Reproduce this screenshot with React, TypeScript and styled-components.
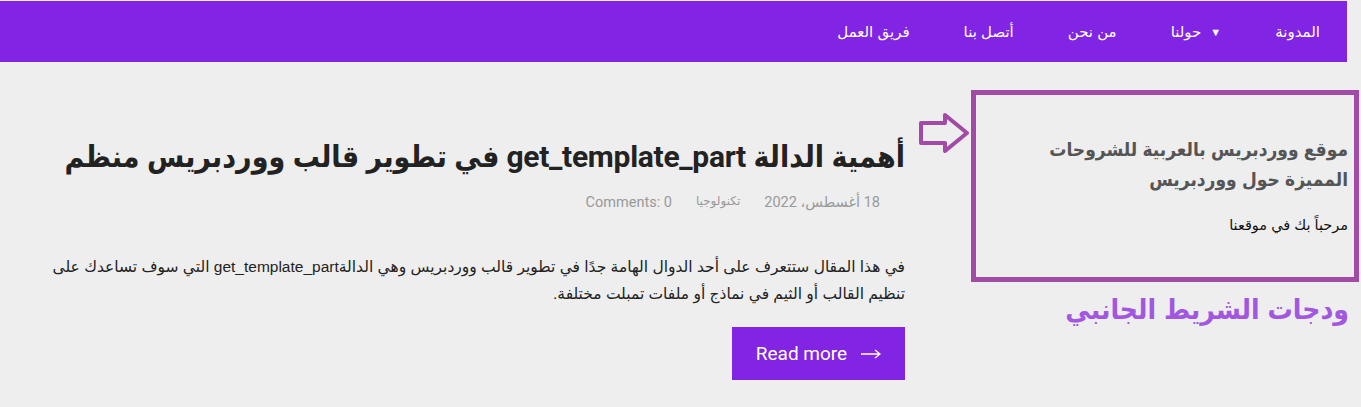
import React from 'react'
import styled, { createGlobalStyle } from 'styled-components'

const GlobalStyle = createGlobalStyle`
  html, body {
    margin: 0;
    padding: 0;
    background: #eeeeee;
  }
  body {
    font-family: "Liberation Sans", "DejaVu Sans", sans-serif;
    overflow: hidden;
  }
`

const Page = styled.div`
  direction: rtl;
  width: 1361px;
  min-height: 407px;
  background: #eeeeee;
  padding-top: 1px;
`

const Header = styled.header`
  width: 1347px;
  height: 61px;
  margin: 0 auto 0 0;
  background: #8224e3;
  display: flex;
  align-items: center;
  box-sizing: border-box;
`

const NavItem = styled.a`
  color: #ffffff;
  font-size: 15px;
  padding: 0 27px;
  text-decoration: none;
  display: flex;
  align-items: center;
  gap: 9px;
`

const Caret = styled.span`
  font-size: 11px;
`

const Body = styled.div`
  display: flex;
  gap: 66px;
  padding: 28px 2px 0 30px;
`

const Main = styled.main`
  width: 875px;
  display: flex;
  flex-direction: column;
  align-items: flex-start;
`

const Title = styled.h1`
  margin: 47px 0 0;
  font-family: "Roboto", "DejaVu Sans Condensed", "DejaVu Sans", sans-serif;
  font-size: 30px;
  font-weight: 700;
  line-height: 40px;
  color: #222222;
  letter-spacing: -0.3px;
`

const Meta = styled.div`
  display: flex;
  gap: 24px;
  margin: 17px 25px 0 0;
  font-family: "Roboto", "DejaVu Sans", sans-serif;
  font-size: 14.5px;
  color: #999999;
`

const MetaSmall = styled.span`
  font-size: 12px;
`

const Excerpt = styled.p`
  margin: 42px 0 0;
  font-family: "Liberation Sans", "DejaVu Sans", sans-serif;
  font-size: 15.5px;
  line-height: 27px;
  color: #222222;
`

const ReadMore = styled.a`
  margin-top: 20px;
  width: 173px;
  height: 53px;
  background: #8224e3;
  color: #ffffff;
  font-family: "Roboto", sans-serif;
  font-size: 19px;
  display: flex;
  align-items: center;
  justify-content: center;
  gap: 14px;
  direction: ltr;
  text-decoration: none;
`

const Sidebar = styled.aside`
  width: 388px;
  display: flex;
  flex-direction: column;
`

const WidgetBox = styled.div`
  position: relative;
  height: 192px;
  border: 5px solid #a24ba6;
  box-sizing: border-box;
  padding: 40px 6px 0 10px;
`

const Pointer = styled.svg`
  position: absolute;
  left: -57px;
  top: 18px;
`

const SiteTitle = styled.h2`
  margin: 0;
  font-family: "Liberation Sans", "DejaVu Sans Condensed", "DejaVu Sans", sans-serif;
  font-size: 19px;
  font-weight: 700;
  line-height: 30px;
  color: #555555;
`

const Welcome = styled.p`
  margin: 22px 0 0;
  font-size: 14.5px;
  color: #111111;
`

const Label = styled.div`
  margin: 11px 10px 0 0;
  font-family: "Liberation Sans", "DejaVu Sans Condensed", "DejaVu Sans", sans-serif;
  font-size: 28px;
  font-weight: 700;
  color: #a257e0;
`

const navItems = ['المدونة', 'حولنا', 'من نحن', 'أتصل بنا', 'فريق العمل']

export default function App() {
  return (
    <>
      <GlobalStyle />
      <Page>
        <Header>
          {navItems.map((item) => (
            <NavItem key={item} href="#">
              {item === 'حولنا' && <Caret>▼</Caret>}
              {item}
            </NavItem>
          ))}
        </Header>
        <Body>
          <Sidebar>
            <WidgetBox>
              <Pointer width="52" height="40" viewBox="0 0 52 40">
                <path
                  d="M2 10 H26 V2 L48 20 L26 38 V30 H2 Z"
                  fill="none"
                  stroke="#a24ba6"
                  strokeWidth="4"
                  strokeLinejoin="round"
                />
              </Pointer>
              <SiteTitle>موقع ووردبريس بالعربية للشروحات المميزة حول ووردبريس</SiteTitle>
              <Welcome>مرحباً بك في موقعنا</Welcome>
            </WidgetBox>
            <Label>ودجات الشريط الجانبي</Label>
          </Sidebar>
          <Main>
            <Title>أهمية الدالة get_template_part في تطوير قالب ووردبريس منظم</Title>
            <Meta>
              <span>18 أغسطس، 2022</span>
              <MetaSmall>تكنولوجيا</MetaSmall>
              <span>Comments: 0</span>
            </Meta>
            <Excerpt>
              في هذا المقال ستتعرف على أحد الدوال الهامة جدًا في تطوير قالب ووردبريس وهي الدالةget_template_part التي سوف تساعدك على تنظيم القالب أو الثيم في نماذج أو ملفات تمبلت مختلفة.
            </Excerpt>
            <ReadMore href="#">
              Read more
              <svg width="20" height="10" viewBox="0 0 20 10">
                <path d="M0 5 H19 M14 1 L19 5 L14 9" fill="none" stroke="#ffffff" strokeWidth="1.4" />
              </svg>
            </ReadMore>
          </Main>
        </Body>
      </Page>
    </>
  )
}
